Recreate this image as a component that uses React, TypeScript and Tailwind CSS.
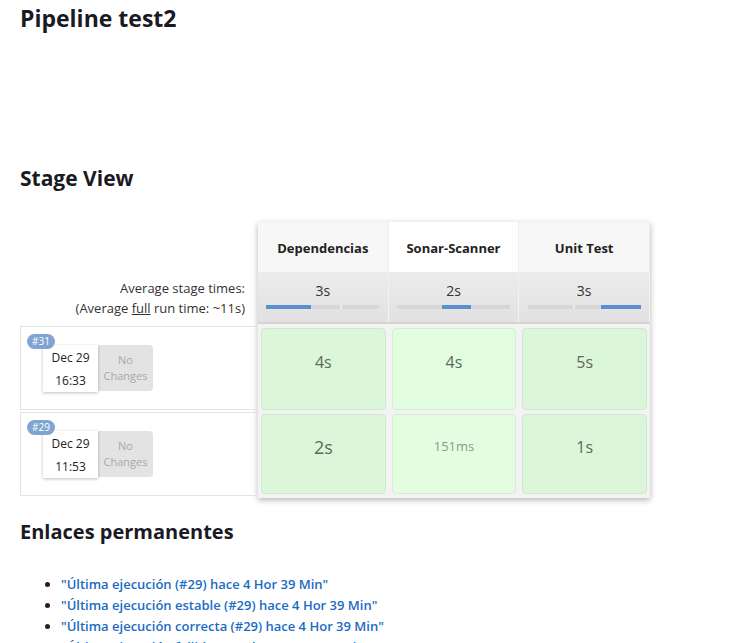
const font = { fontFamily: '"Open Sans", "Noto Sans", sans-serif' };

type Stage = { name: string; avg: string; bar: [number, number]; divider: number; hl?: boolean };

const stages: Stage[] = [
  { name: "Dependencias", avg: "3s", bar: [0, 45], divider: 74 },
  { name: "Sonar-Scanner", avg: "2s", bar: [45, 29], divider: -1, hl: true },
  { name: "Unit Test", avg: "3s", bar: [73, 40], divider: 45 },
];

const runs = [
  { id: "#31", date: "Dec 29", time: "16:33", cells: ["4s", "4s", "5s"], sizes: ["text-[16px]", "text-[16px]", "text-[16px]"] },
  { id: "#29", date: "Dec 29", time: "11:53", cells: ["2s", "151ms", "1s"], sizes: ["text-[18px] text-[#4b5f4b]", "text-[13px] text-[#8a9a8a]", "text-[16px]"] },
];

const links = [
  "\"Última ejecución (#29) hace 4 Hor 39 Min\"",
  "\"Última ejecución estable (#29) hace 4 Hor 39 Min\"",
  "\"Última ejecución correcta (#29) hace 4 Hor 39 Min\"",
  "\"Última ejecución fallida (#30) hace 3 Hor 49 Min\"",
];

function RunInfo({ id, date, time }: { id: string; date: string; time: string }) {
  return (
    <div className="h-[84px] border border-[#e3e3e3] relative mb-[2px] mt-[2px]">
      <span className="absolute left-[6px] top-[7px] z-10 bg-[#80a5d1] text-white text-[10px] leading-[15px] px-[5px] rounded-full">
        {id}
      </span>
      <div className="flex ml-[22px] mt-[18px]">
        <div className="w-[55px] h-[47px] bg-white shadow-[0_1px_3px_rgba(0,0,0,0.25)] flex flex-col items-center justify-center text-[12px] text-[#222] leading-[23px] relative z-0">
          <span>{date}</span>
          <span>{time}</span>
        </div>
        <div className="w-[55px] h-[46px] bg-[#e3e3e3] rounded-r-[4px] flex flex-col items-center justify-center text-[11px] text-[#a8a8a8] leading-[16px]">
          <span>No</span>
          <span>Changes</span>
        </div>
      </div>
    </div>
  );
}

export default function App() {
  return (
    <div className="bg-white min-h-screen px-5 text-[#222]" style={font}>
      <h1 className="text-[23px] font-bold leading-[29px] pt-[4px] text-[#1a1a24]">Pipeline test2</h1>

      <h2 className="text-[21px] font-bold leading-[24px] mt-[133px] text-[#1a1a24]">Stage View</h2>

      {/* stage view table */}
      <div className="flex mt-[32px]">
        <div className="w-[238px]">
          <div className="h-[50px]" />
          <div className="h-[52px] flex flex-col items-end justify-center pr-[13px] text-[13px] leading-[20px] text-[#333]">
            <span>Average stage times:</span>
            <span>
              (Average <u>full</u> run time: ~11s)
            </span>
          </div>
          {runs.map((r) => (
            <RunInfo key={r.id} id={r.id} date={r.date} time={r.time} />
          ))}
        </div>

        <div className="w-[392px] shadow-[0_2px_6px_rgba(0,0,0,0.3)] bg-[#f3f3f3] pb-[3px]">
          <div className="grid grid-cols-3">
            {stages.map((s) => (
              <div
                key={s.name}
                className={
                  s.hl
                    ? "h-[50px] bg-white flex items-center justify-center pt-[3px] text-[13px] font-bold text-[#222] border-r border-[#eee]"
                    : "h-[50px] bg-[#f7f7f7] flex items-center justify-center pt-[3px] text-[13px] font-bold text-[#222] border-r border-[#eee]"
                }
              >
                {s.name}
              </div>
            ))}
          </div>
          <div className="grid grid-cols-3 border-b-2 border-[#d4d4d4]">
            {stages.map((s) => (
              <div
                key={s.name}
                className="h-[50px] bg-gradient-to-b from-[#ececec] to-[#e1e1e1] flex flex-col items-center pt-[9px] border-r border-[#f2f2f2]"
              >
                <span className="text-[14px] leading-[20px] text-[#333]">{s.avg}</span>
                <div className="relative w-[113px] h-[4px] bg-[#d7d7d7] mt-[4px]">
                  {s.divider > 0 && (
                    <div className="absolute top-0 h-[4px] w-[2px] bg-[#ececec]" style={{ left: s.divider }} />
                  )}
                  <div className="absolute top-0 h-[4px] bg-[#5c8ed3]" style={{ left: s.bar[0], width: s.bar[1] }} />
                </div>
              </div>
            ))}
          </div>
          {runs.map((r, ri) => (
            <div key={r.id} className={ri === 0 ? "grid grid-cols-3 h-[87px] pt-[4px]" : "grid grid-cols-3 h-[84px] pt-[3px]"}>
              {r.cells.map((c, ci) => (
                <div key={ci} className="px-[3px] h-full pb-[1px]">
                  <div
                    className={
                      (ci === 1
                        ? "bg-[#e3fde1] border-[#d6ecd3] "
                        : "bg-[#dcf6da] border-[#d0e8cd] ") +
                      "h-full border rounded-[4px] flex items-center justify-center pb-[14px] text-[#5b6b5b] " +
                      r.sizes[ci]
                    }
                  >
                    {c}
                  </div>
                </div>
              ))}
            </div>
          ))}
        </div>
      </div>

      <h2 className="text-[20px] font-bold leading-[24px] mt-[22px] text-[#1a1a24]">Enlaces permanentes</h2>

      <ul className="list-disc pl-[41px] mt-[30px] text-[13px] leading-[21px]">
        {links.map((l) => (
          <li key={l} className="text-[#1c6bc4] font-semibold marker:text-[#222]">
            {l}
          </li>
        ))}
      </ul>
    </div>
  );
}
